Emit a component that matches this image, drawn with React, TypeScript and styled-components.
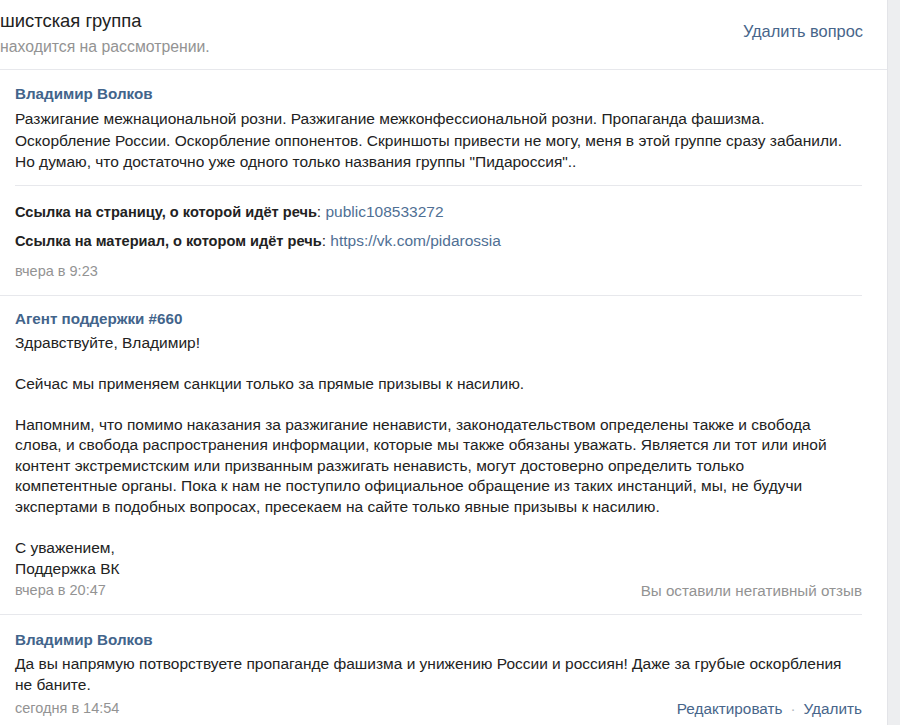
import React from "react";
import styled, { createGlobalStyle } from "styled-components";

const Global = createGlobalStyle`
  html, body { margin: 0; padding: 0; background: #ffffff; }
  body { font-family: "Liberation Sans", Arial, sans-serif; color: #222222; }
`;

const Page = styled.div`
  display: flex;
  width: 900px;
  height: 725px;
  overflow: hidden;
`;

const Card = styled.div`
  width: 887px;
  flex: none;
  background: #ffffff;
`;

const Scrollbar = styled.div`
  flex: 1;
  background: #edeef0;
  border-left: 1px solid #e3e4e8;
`;

const Header = styled.div`
  height: 69px;
  border-bottom: 1px solid #e7e8ec;
  display: flex;
  align-items: flex-start;
  justify-content: space-between;
  padding-right: 24px;
`;

const HeaderText = styled.div`
  display: flex;
  flex-direction: column;
  padding-top: 8px;
`;

const Title = styled.div`
  font-size: 18.4px;
  line-height: 26px;
  color: #222222;
`;

const Subtitle = styled.div`
  font-size: 15.8px;
  line-height: 20px;
  color: #939393;
  margin-top: 3px;
`;

const HeaderLink = styled.a`
  font-size: 16.4px;
  line-height: 20px;
  color: #47658a;
  margin-top: 21px;
  text-decoration: none;
`;

const Message = styled.div<{ $last?: boolean; $pad?: number }>`
  margin-right: 25px;
  padding: ${(p) => p.$pad ?? 12}px 0 ${(p) => (p.$last ? "0" : "13px")} 15px;
  border-bottom: ${(p) => (p.$last ? "none" : "1px solid #e7e8ec")};
`;

const Author = styled.div`
  font-size: 15.2px;
  line-height: 21px;
  font-weight: bold;
  color: #42648b;
  margin-bottom: 4px;
`;

const Body = styled.div<{ $lh: number }>`
  font-size: 15.5px;
  line-height: ${(p) => p.$lh}px;
  color: #222222;
  white-space: pre-line;
`;

const Divider = styled.div`
  height: 1px;
  background: #e7e8ec;
  margin: 12px 0 15px;
`;

const Field = styled.div`
  font-size: 15.5px;
  line-height: 21px;
  color: #222222;
  & + & { margin-top: 7px; }
`;

const FieldLabel = styled.b`
  font-weight: bold;
  font-size: 14.6px;
`;

const FieldLink = styled.a`
  color: #4f6f94;
  text-decoration: none;
`;

const Footer = styled.div<{ $gap: number }>`
  display: flex;
  justify-content: space-between;
  align-items: center;
  margin-top: ${(p) => p.$gap}px;
  font-size: 14.5px;
  line-height: 21px;
`;

const Date = styled.span`
  color: #939393;
`;

const Note = styled.span`
  color: #939393;
  font-size: 15.2px;
`;

const Actions = styled.div`
  display: flex;
  align-items: center;
  font-size: 15.3px;
`;

const Action = styled.a`
  color: #47658a;
  text-decoration: none;
`;

const Dot = styled.span`
  color: #b4b9c0;
  margin: 0 8px;
`;

export default function App() {
  return (
    <>
      <Global />
      <Page>
        <Card>
          <Header>
            <HeaderText>
              <Title>шистская группа</Title>
              <Subtitle>находится на рассмотрении.</Subtitle>
            </HeaderText>
            <HeaderLink>Удалить вопрос</HeaderLink>
          </Header>

          <Message $pad={13}>
            <Author>Владимир Волков</Author>
            <Body $lh={21.5}>
              {"Разжигание межнациональной розни. Разжигание межконфессиональной розни. Пропаганда фашизма.\nОскорбление России. Оскорбление оппонентов. Скриншоты привести не могу, меня в этой группе сразу забанили.\nНо думаю, что достаточно уже одного только названия группы \"Пидароссия\".."}
            </Body>
            <Divider />
            <Field>
              <FieldLabel>Ссылка на страницу, о которой идёт речь</FieldLabel>:{" "}
              <FieldLink>public108533272</FieldLink>
            </Field>
            <Field>
              <FieldLabel>Ссылка на материал, о котором идёт речь</FieldLabel>:{" "}
              <FieldLink>https://vk.com/pidarossia</FieldLink>
            </Field>
            <Footer $gap={9}>
              <Date>вчера в 9:23</Date>
            </Footer>
          </Message>

          <Message>
            <Author>Агент поддержки #660</Author>
            <Body $lh={20.55}>
              {"Здравствуйте, Владимир!\n\nСейчас мы применяем санкции только за прямые призывы к насилию.\n\nНапомним, что помимо наказания за разжигание ненависти, законодательством определены также и свобода\nслова, и свобода распространения информации, которые мы также обязаны уважать. Является ли тот или иной\nконтент экстремистским или призванным разжигать ненависть, могут достоверно определить только\nкомпетентные органы. Пока к нам не поступило официальное обращение из таких инстанций, мы, не будучи\nэкспертами в подобных вопросах, пресекаем на сайте только явные призывы к насилию.\n\nС уважением,\nПоддержка ВК"}
            </Body>
            <Footer $gap={1}>
              <Date>вчера в 20:47</Date>
              <Note>Вы оставили негативный отзыв</Note>
            </Footer>
          </Message>

          <Message $last $pad={14}>
            <Author>Владимир Волков</Author>
            <Body $lh={20.8}>
              {"Да вы напрямую потворствуете пропаганде фашизма и унижению России и россиян! Даже за грубые оскорбления\nне баните."}
            </Body>
            <Footer $gap={2}>
              <Date>сегодня в 14:54</Date>
              <Actions>
                <Action>Редактировать</Action>
                <Dot>·</Dot>
                <Action>Удалить</Action>
              </Actions>
            </Footer>
          </Message>
        </Card>
        <Scrollbar />
      </Page>
    </>
  );
}
